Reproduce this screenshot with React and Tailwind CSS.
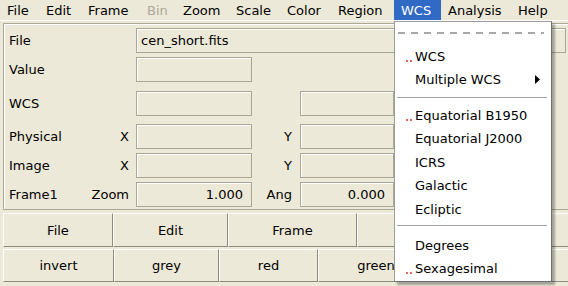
import React from 'react';

const font = { fontFamily: '"DejaVu Sans", "Liberation Sans", sans-serif' };

const menus = [
  { name: 'File', w: 'w-[39px]' },
  { name: 'Edit', w: 'w-[42px]' },
  { name: 'Frame', w: 'w-[59px]' },
  { name: 'Bin', w: 'w-[36px]', disabled: true },
  { name: 'Zoom', w: 'w-[53px]' },
  { name: 'Scale', w: 'w-[51px]' },
  { name: 'Color', w: 'w-[51px]' },
  { name: 'Region', w: 'w-[63px]' },
  { name: 'WCS', w: 'w-[47px]', active: true },
  { name: 'Analysis', w: 'w-[70px]' },
  { name: 'Help', w: 'w-[57px]' },
];

const Box = ({ className = '', children }) => (
  <div
    className={`h-[25px] border border-[#a9a696] shadow-[inset_1px_1px_0_#ffffff] flex items-center justify-end px-[8px] ${className}`}
  >
    {children}
  </div>
);

const Row = ({ mt, label, sub, left, ylabel, right, wide }) => (
  <div className={`flex items-center ${mt}`}>
    <div className="w-[82px] pl-[5px]">{label}</div>
    <div className="w-[43px] text-right">{sub}</div>
    <div className="w-[7px]" />
    {wide ? (
      <div className="h-[25px] w-[430px] border border-[#a9a696] shadow-[inset_1px_1px_0_#ffffff] flex items-center pl-[4px]">
        {wide}
      </div>
    ) : (
      <>
        <Box className="w-[116px]">{left}</Box>
        {ylabel !== undefined && (
          <>
            <div className="w-[40px] text-right">{ylabel}</div>
            <div className="w-[8px]" />
            <Box className="w-[94px]">{right}</Box>
          </>
        )}
      </>
    )}
  </div>
);

const Btn = ({ w, children }) => (
  <div
    className={`${w} shrink-0 h-full flex items-center justify-center border-t border-l border-t-white border-l-white border-r border-b border-r-[#8f8c7e] border-b-[#8f8c7e]`}
  >
    {children}
  </div>
);

const Dots = () => (
  <span className="w-[20px] h-[14px] flex items-end justify-end gap-[2px] pr-[3px] pb-[2px]">
    <span className="w-[2px] h-[2px] bg-[#e03030] rounded-full" />
    <span className="w-[2px] h-[2px] bg-[#e03030] rounded-full" />
  </span>
);

const Item = ({ h, dots, children, arrow }) => (
  <div className={`${h} flex items-center`}>
    {dots ? <Dots /> : <span className="w-[20px]" />}
    <span>{children}</span>
    {arrow && (
      <svg className="ml-auto mr-[11px]" width="5" height="9" viewBox="0 0 5 9">
        <path d="M0 0 L5 4.5 L0 9 Z" fill="#000" />
      </svg>
    )}
  </div>
);

const Sep = ({ h, pt }) => (
  <div className={`${h} ${pt}`}>
    <div className="ml-[2px] mr-[4px] h-px bg-[#a3a3a3]" />
  </div>
);

export default function App() {
  return (
    <div
      className="relative w-[568px] h-[286px] overflow-hidden bg-[#ece9d8] text-[13px] text-black leading-none"
      style={font}
    >
      {/* menu bar */}
      <div className="flex h-[21px] border-b border-white">
        {menus.map((m) => (
          <div
            key={m.name}
            className={`${m.w} shrink-0 h-full flex items-center pl-[7px] ${
              m.active ? 'bg-[#316ac5] text-white' : ''
            } ${m.disabled ? 'text-[#aca899]' : ''}`}
          >
            {m.name}
          </div>
        ))}
      </div>

      {/* info panel */}
      <div className="ml-[3px] mt-[2px] h-[187px] w-[600px] border border-[#aca899] shadow-[inset_1px_1px_0_#ffffff] pt-[1px]">
        <Row mt="mt-[3px]" label="File" wide="cen_short.fits" />
        <Row mt="mt-[4px]" label="Value" />
        <Row mt="mt-[9px]" label="WCS" ylabel="" />
        <Row mt="mt-[8px]" label="Physical" sub="X" ylabel="Y" />
        <Row mt="mt-[4px]" label="Image" sub="X" ylabel="Y" />
        <Row mt="mt-[4px]" label="Frame1" sub="Zoom" left="1.000" ylabel="Ang" right="0.000" />
      </div>

      {/* button bars */}
      <div className="mt-[3px] ml-[3px] h-[34px] flex">
        <Btn w="w-[110px]">File</Btn>
        <Btn w="w-[115px]">Edit</Btn>
        <Btn w="w-[129px]">Frame</Btn>
        <Btn w="w-[115px]" />
        <Btn w="w-[120px]" />
      </div>
      <div className="mt-[2px] ml-[3px] h-[33px] flex">
        <Btn w="w-[111px]">invert</Btn>
        <Btn w="w-[105px]">grey</Btn>
        <Btn w="w-[99px]">red</Btn>
        <Btn w="w-[116px]">green</Btn>
        <Btn w="w-[160px]" />
      </div>

      {/* WCS dropdown */}
      <div className="absolute left-[394px] top-[21px] w-[158px] h-[261px] bg-white border border-[#9d9d9d] border-r-[#6f6f6f] border-b-[#6f6f6f] shadow-[3px_3px_2px_rgba(0,0,0,0.3)]">
        <div className="h-[22px] flex items-center pl-[3px]">
          <svg width="146" height="2" viewBox="0 0 146 2">
            <line x1="0" y1="1" x2="146" y2="1" stroke="#a8a8a8" strokeWidth="2" strokeDasharray="7 6" />
          </svg>
        </div>
        <Item h="h-[23px] mt-[1px]" dots>WCS</Item>
        <Item h="h-[22px]" arrow>Multiple WCS</Item>
        <Sep h="h-[14px]" pt="pt-[7px]" />
        <Item h="h-[23px]" dots>Equatorial B1950</Item>
        <Item h="h-[23px]">Equatorial J2000</Item>
        <Item h="h-[24px]">ICRS</Item>
        <Item h="h-[23px]">Galactic</Item>
        <Item h="h-[24px]">Ecliptic</Item>
        <Sep h="h-[13px]" pt="pt-[4px]" />
        <Item h="h-[23px]">Degrees</Item>
        <Item h="h-[23px]" dots>Sexagesimal</Item>
      </div>
    </div>
  );
}
